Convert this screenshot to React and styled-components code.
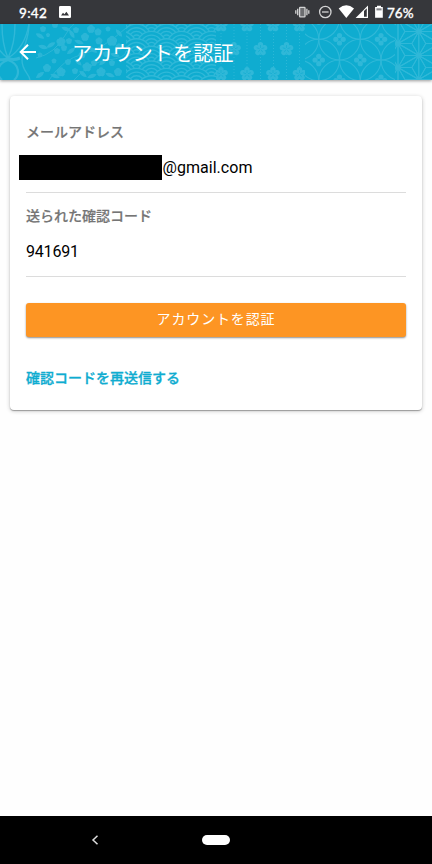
import React from "react";
import styled, { createGlobalStyle } from "styled-components";

const GlobalStyle = createGlobalStyle`
  * { box-sizing: border-box; }
  body { margin: 0; background: #fefefe; font-family: Roboto, "Noto Sans CJK JP", sans-serif; }
`;

const Screen = styled.div`
  width: 432px;
  height: 864px;
  display: flex;
  flex-direction: column;
  overflow: hidden;
`;

const StatusBar = styled.div`
  height: 24px;
  flex: none;
  display: flex;
  align-items: center;
  padding: 0 19px;
  background: #36373b;
  color: #fff;
`;

const StatusText = styled.span`
  font: 500 13.5px/24px Lato, sans-serif;
  -webkit-text-stroke: 0.3px #fff;
  letter-spacing: ${(p) => p.$tracking || "0"};
  width: ${(p) => p.$width}px;
  white-space: nowrap;
  padding-top: 1px;
`;

const StatusIcons = styled.svg`
  display: block;
  margin-left: ${(p) => p.$gap};
  margin-right: ${(p) => p.$after || "0"};
`;

const Header = styled.header`
  height: 56px;
  flex: none;
  position: relative;
  z-index: 1;
  display: flex;
  align-items: center;
  padding-left: 19px;
  background: #0facd0;
  box-shadow: 0 1px 3px rgba(0, 0, 0, 0.4);
`;

const PatternLayer = styled.svg`
  position: absolute;
  inset: 0;
`;

const BackIcon = styled.svg`
  position: relative;
  display: block;
`;

const Title = styled.h1`
  position: relative;
  margin: 2px 0 0 35px;
  color: #fff;
  font: 400 20.2px/30px "Noto Sans CJK JP", sans-serif;
  white-space: nowrap;
`;

const Main = styled.main`
  flex: 1;
  padding: 16px 10px;
`;

const Card = styled.section`
  height: 314px;
  padding: 25px 16px 0;
  border-radius: 4px;
  background: #fff;
  box-shadow: 0 1px 1px rgba(0, 0, 0, 0.3), 0 1px 4px rgba(0, 0, 0, 0.22);
`;

const Field = styled.div`
  height: ${(p) => p.$height}px;
  border-bottom: 1px solid #dcdcdc;
`;

const Label = styled.div`
  padding-top: ${(p) => p.$top}px;
  color: #757575;
  font: 500 14px/20px "Noto Sans CJK JP", sans-serif;
  -webkit-text-stroke: 0.2px #757575;
`;

const Value = styled.div`
  display: flex;
  align-items: center;
  height: 26px;
  margin-top: 14px;
  color: #000;
  font: 400 16px/26px Roboto, sans-serif;
  letter-spacing: ${(p) => p.$tracking}px;
`;

const Redaction = styled.span`
  width: 143px;
  height: 25px;
  margin: 0 0.5px 1px -7px;
  background: #000;
`;

const SubmitButton = styled.button`
  display: block;
  width: 100%;
  height: 34px;
  margin-top: 26px;
  padding: 0 0 3px;
  border: 0;
  border-radius: 3px;
  background: #fd9523;
  color: #fff;
  font: 400 14px/31px "Noto Sans CJK JP", sans-serif;
  letter-spacing: 0.85px;
  box-shadow: 0 1px 2px rgba(0, 0, 0, 0.45);
`;

const ResendLink = styled.a`
  display: block;
  margin-top: 30px;
  color: #0facd0;
  font: 500 14px/20px "Noto Sans CJK JP", sans-serif;
  -webkit-text-stroke: 0.3px #0facd0;
`;

const NavBar = styled.nav`
  height: 48px;
  flex: none;
  display: flex;
  align-items: center;
  padding-left: 91px;
  background: #000;
`;

const HomePill = styled.span`
  width: 28px;
  height: 10px;
  margin-left: 103px;
  border-radius: 5px;
  background: #fff;
`;

const TINT = "#30b8d8";

const FLORAL = [
  [43, 5, 3], [55, 1, 3], [48, 11, 2], [61, 18, 4.5], [69, 17, 3], [64, 24, 3], [57, 27, 3],
  [47, 44, 4], [61, 48, 4.5], [68, 38, 3], [40, 31, 2.5], [54, 37, 2.5], [76, 6, 3], [85, 13, 4],
  [91, 5, 4], [98, 8, 3.5], [99, 17, 3.5], [108, 5, 2.5], [112, 17, 5], [119, 23, 3.5], [82, 31, 3.5],
  [87, 43, 4.5], [101, 48, 4.5], [94, 39, 3], [75, 47, 3], [112, 39, 3], [118, 48, 4], [106, 30, 3],
];
const LEAVES = [
  [40, 12, 30], [51, 21, -30], [72, 10, 60], [79, 18, 20], [43, 23, 15], [55, 52, 20], [71, 27, -35],
  [78, 38, 45], [93, 26, 30], [103, 38, -40], [110, 51, 20], [92, 52, -20], [119, 9, 50], [40, 51, -35],
  [66, 5, 20], [115, 31, 15], [83, 50, 40],
];
const WAVES = [];
for (let row = -2; row < 9; row++) {
  for (let col = -2; col < 3; col++) {
    WAVES.push([166.5 + col * 30 + (row % 2 ? 15 : 0), 15 + row * 7.4]);
  }
}
const PLUMS = [
  [221, 1], [247, 1], [273, 1], [299.5, 1],
  [234, 25], [260.5, 25], [286.5, 25],
  [221, 50], [247, 50], [273, 50], [299.5, 50],
];
const RINGS = [];
const ASANOHA = [];
for (let i = 0; i < 6; i++) {
  for (let j = 0; j < 5; j++) {
    if ((i + j) % 2 === 0) RINGS.push([298 + i * 20.75, -26.1 + j * 20.7]);
  }
}
for (let c = -1; c < 3; c++) {
  for (let r = -1; r < 4; r++) {
    ASANOHA.push([398 + c * 20.8, -4.5 + r * 24 + (c % 2 ? 12 : 0)]);
  }
}

function Plum({ x, y }) {
  return (
    <g transform={`translate(${x} ${y})`}>
      {[0, 72, 144, 216, 288].map((a) => (
        <circle key={a} cy="-4.3" r="2.7" transform={`rotate(${a})`} />
      ))}
      <circle r="3" />
      <g stroke="#0facd0" strokeWidth=".6">
        {[0, 72, 144, 216, 288].map((a) => (
          <path key={a} d="M0-1V-4" transform={`rotate(${a})`} />
        ))}
      </g>
    </g>
  );
}

function HeaderPattern() {
  return (
    <PatternLayer width="432" height="56" viewBox="0 0 432 56">
      <defs>
        <clipPath id="s1"><path d="M0 0h36v56H0z" /></clipPath>
        <clipPath id="s2"><path d="M36 0h90v56H36z" /></clipPath>
        <clipPath id="s3"><path d="M126 0h90v56h-90z" /></clipPath>
        <clipPath id="s4"><path d="M216 0h89v56h-89z" /></clipPath>
        <clipPath id="s5"><path d="M305 0h90v56h-90z" /></clipPath>
        <clipPath id="s6"><path d="M395 0h37v56h-37z" /></clipPath>
      </defs>
      <g clipPath="url(#s1)" fill="none" stroke={TINT} strokeWidth="1.4">
        <path d="M2 0Q2 20 8 34Q15 20 15 0M-11 0Q-6 25 8 34Q25 24 29 0" />
        <path d="M29 0C29 17 22 22 22 36C22 47 29 49 30 56" />
        <path d="M-3 35Q4 37 8 34Q13 37 20 34" strokeWidth="3" />
        <path d="M8 36C-4 40-4 51 2 56M8 36C20 40 20 51 14 56" strokeWidth="2.2" />
      </g>
      <g clipPath="url(#s2)" fill={TINT} opacity=".9">
        <path d="M36 34Q55 30 66 10T92 0M49 56Q63 35 83 30T126 4M74 56Q90 38 108 36T126 27" fill="none" stroke={TINT} />
        {FLORAL.map(([x, y, r]) => (
          <g key={`${x}-${y}`} transform={`translate(${x} ${y})`}>
            {[0, 72, 144, 216, 288].map((a) => (
              <circle key={a} cy={-r * 0.5} r={r * 0.54} transform={`rotate(${a})`} />
            ))}
          </g>
        ))}
        {LEAVES.map(([x, y, a]) => (
          <path key={`${x}-${y}`} d="M-5 0Q0-4 5 0Q0 4-5 0" transform={`translate(${x} ${y}) rotate(${a})`} />
        ))}
      </g>
      <g clipPath="url(#s3)" fill="#0facd0" stroke={TINT} strokeWidth="1.4">
        {WAVES.map(([x, y]) => (
          <g key={`${x}-${y}`}>
            {[15, 11.3, 7.6, 4].map((r) => <circle key={r} cx={x} cy={y} r={r} />)}
          </g>
        ))}
      </g>
      <g clipPath="url(#s4)">
        <g stroke={TINT} strokeWidth=".9" strokeDasharray="1 2">
          {[221, 234, 247, 260.5, 273.5, 286.5, 299.5].map((x) => <path key={x} d={`M${x} 0V56`} />)}
        </g>
        <g fill={TINT}>{PLUMS.map(([x, y]) => <Plum key={`${x}-${y}`} x={x} y={y} />)}</g>
      </g>
      <g clipPath="url(#s5)">
        {RINGS.map(([x, y]) => (
          <g key={`${x}-${y}`} transform={`translate(${x} ${y})`}>
            <circle r="20.7" fill="none" stroke={TINT} strokeWidth="1.1" />
            <g fill={TINT}>
              <circle cx="-3.7" r="2.6" /><circle cx="3.7" r="2.6" />
              <circle cy="-3.7" r="2.6" /><circle cy="3.7" r="2.6" />
            </g>
          </g>
        ))}
      </g>
      <g clipPath="url(#s6)" stroke={TINT} strokeWidth="1">
        {ASANOHA.map(([x, y]) => (
          <g key={`${x}-${y}`} transform={`translate(${x} ${y})`}>
            {[0, 60, 120, 180, 240, 300].map((a) => (
              <path key={a} d="M0 0V-24M0 0L6.93-12L0-24" fill="none" transform={`rotate(${a})`} />
            ))}
            <circle r="2.4" fill={TINT} />
          </g>
        ))}
      </g>
    </PatternLayer>
  );
}

export default function App() {
  return (
    <Screen>
      <GlobalStyle />
      <StatusBar>
        <StatusText $width={39} $tracking="0.3px">9:42</StatusText>
        <StatusIcons $gap="1px" width="12" height="12" viewBox="0 0 12 12">
          <rect width="12" height="12" rx="1.3" fill="#fff" />
          <path d="M2 9.5L4 6.7L5.4 8.3L7.4 5.8L10 9.5Z" fill="#36373b" />
        </StatusIcons>
        <StatusIcons $gap="auto" $after="4px" width="88" height="16" viewBox="295 4 88 16">
          <g fill="none" stroke="#d4d4d5" strokeWidth="1.3">
            <rect x="299.6" y="7.4" width="5.4" height="9.4" rx=".6" fill="#6c6d70" />
            <path d="M297.7 8.8V15.2M306.9 8.8V15.2M295.8 10.3V13.7M308.8 10.3V13.7" />
            <circle cx="325.3" cy="12" r="5.7" />
            <path d="M322 12H328.6" />
          </g>
          <path d="M338.7 8.5Q346.3 2 354 8.5L346.3 18Z" fill="#fff" />
          <path d="M355.6 18L368 5.6V18Z" fill="#fff" />
          <path d="M364 11L366.8 8.2V16.7H364Z" fill="#36373b" />
          <path d="M375.1 7H377V5.8H381V7H382.8V17.8H375.1Z" fill="#fff" />
          <path d="M376.4 8.3H381.6V10.4H376.4Z" fill="#85868a" />
        </StatusIcons>
        <StatusText $width={26}>76%</StatusText>
      </StatusBar>
      <Header>
        <HeaderPattern />
        <BackIcon width="18" height="18" viewBox="0 0 18 18" fill="none" stroke="#fff" strokeWidth="2">
          <path d="M17 9H2M9 1.7L1.7 9L9 16.3" />
        </BackIcon>
        <Title>アカウントを認証</Title>
      </Header>
      <Main>
        <Card>
          <Field $height={72}>
            <Label $top={0}>メールアドレス</Label>
            <Value $tracking={0.04}><Redaction />@gmail.com</Value>
          </Field>
          <Field $height={84}>
            <Label $top={12}>送られた確認コード</Label>
            <Value $tracking={-0.2}>941691</Value>
          </Field>
          <SubmitButton>アカウントを認証</SubmitButton>
          <ResendLink>確認コードを再送信する</ResendLink>
        </Card>
      </Main>
      <NavBar>
        <svg width="8" height="12" viewBox="0 0 8 12" fill="none" stroke="#ddd" strokeWidth="1.5">
          <path d="M6.5 1.8L2 6L6.5 10.2" />
        </svg>
        <HomePill />
      </NavBar>
    </Screen>
  );
}
